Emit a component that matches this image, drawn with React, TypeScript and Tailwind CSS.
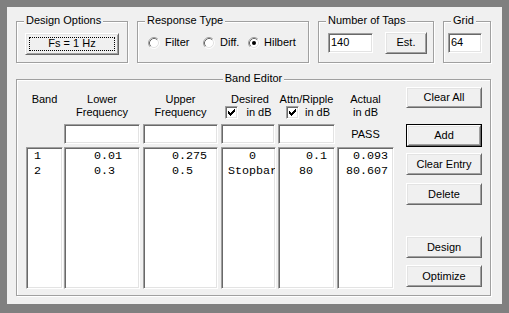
import React from "react";

const raised =
  "bg-[#f0f0f0] border border-t-white border-l-white border-r-[#696969] border-b-[#696969] shadow-[inset_1px_1px_0_#e3e3e3,inset_-1px_-1px_0_#a0a0a0]";
const sunken =
  "bg-white border border-t-[#a0a0a0] border-l-[#a0a0a0] border-r-white border-b-white shadow-[inset_1px_1px_0_#696969,inset_-1px_-1px_0_#e3e3e3]";

function Group({
  title,
  className,
  center,
  children,
}: {
  title: string;
  className: string;
  center?: boolean;
  children?: React.ReactNode;
}) {
  return (
    <div
      className={
        "relative border border-[#a0a0a0] shadow-[1px_1px_0_#fff,inset_1px_1px_0_#fff] " +
        className
      }
    >
      {center ? (
        <div className="absolute -top-[8px] left-0 right-0 flex justify-center">
          <span className="bg-[#f0f0f0] px-[2px] leading-[13px]">{title}</span>
        </div>
      ) : (
        <span className="absolute -top-[8px] left-[7px] bg-[#f0f0f0] px-[2px] leading-[13px]">
          {title}
        </span>
      )}
      {children}
    </div>
  );
}

function Btn({
  label,
  className,
  focus,
}: {
  label: string;
  className: string;
  focus?: boolean;
}) {
  return (
    <div
      className={
        raised +
        " relative flex items-center justify-center leading-[13px] " +
        className
      }
    >
      {focus && (
        <div className="absolute inset-[3px] border border-dotted border-black" />
      )}
      <span>{label}</span>
    </div>
  );
}

function Radio({ checked }: { checked?: boolean }) {
  return (
    <svg width="12" height="12" viewBox="0 0 12 12" className="shrink-0">
      <circle cx="6" cy="6" r="5" fill="#fff" />
      <path d="M2.11 9.89 A5.5 5.5 0 0 1 9.89 2.11" stroke="#a0a0a0" fill="none" />
      <path d="M9.89 2.11 A5.5 5.5 0 0 1 2.11 9.89" stroke="#ffffff" fill="none" />
      <path d="M2.82 9.18 A4.5 4.5 0 0 1 9.18 2.82" stroke="#696969" fill="none" />
      <path d="M9.18 2.82 A4.5 4.5 0 0 1 2.82 9.18" stroke="#e3e3e3" fill="none" />
      {checked && <circle cx="6" cy="6" r="2" fill="#000" />}
    </svg>
  );
}

function Check() {
  return (
    <div className={sunken + " w-[13px] h-[13px] flex items-center justify-center shrink-0"}>
      <svg width="7" height="7" viewBox="0 0 7 7" shapeRendering="crispEdges">
        <path
          d="M0 2h1v3H0z M1 3h1v3H1z M2 4h1v3H2z M3 3h1v3H3z M4 2h1v3H4z M5 1h1v3H5z M6 0h1v3H6z"
          fill="#000"
        />
      </svg>
    </div>
  );
}

function Column({
  width,
  ml,
  header,
  row2,
  items,
  pl,
}: {
  width: string;
  ml: string;
  header: React.ReactNode;
  row2: React.ReactNode;
  items: string[];
  pl: string;
}) {
  return (
    <div className={"flex flex-col " + width + " " + ml}>
      <div className="h-[26px] flex flex-col items-center leading-[13px]">{header}</div>
      <div className="mt-[5px] h-[20px]">{row2}</div>
      <div
        className={
          sunken +
          " mt-[3px] h-[142px] overflow-hidden pt-[1px] font-['Liberation_Mono','Courier_New',monospace] text-[11.7px] leading-[15px] whitespace-pre " +
          pl
        }
      >
        {items.map((t, i) => (
          <div key={i}>{t}</div>
        ))}
      </div>
    </div>
  );
}

export default function App() {
  const input = <div className={sunken + " h-[20px] w-full"} />;
  return (
    <div className="w-[509px] h-[313px] bg-[#808080] p-[7px] font-['Liberation_Sans',Arial,sans-serif] text-[11px] text-black">
      <div className="w-[495px] h-[297px] bg-[#f0f0f0] pl-[9px] pt-[14px]">
        <div className="flex gap-[9px]">
          <Group title="Design Options" className="w-[112px] h-[42px]">
            <div className="h-full flex items-center pl-[8px] pt-[3px]">
              <Btn label="Fs = 1 Hz" className="w-[94px] h-[22px]" focus />
            </div>
          </Group>
          <Group title="Response Type" className="w-[172px] h-[42px]">
            <div className="h-full flex items-center pl-[10px] pt-[1px]">
              <div className="flex items-center gap-[5px] w-[55px]">
                <Radio />
                <span className="leading-[13px]">Filter</span>
              </div>
              <div className="flex items-center gap-[5px] w-[45px]">
                <Radio />
                <span className="leading-[13px]">Diff.</span>
              </div>
              <div className="flex items-center gap-[4px]">
                <Radio checked />
                <span className="leading-[13px]">Hilbert</span>
              </div>
            </div>
          </Group>
          <Group title="Number of Taps" className="w-[116px] h-[42px]">
            <div className="h-full flex items-center pl-[9px] pt-[1px]">
              <div className={sunken + " w-[45px] h-[20px] flex items-center pl-[2px] leading-[13px]"}>
                140
              </div>
              <Btn label="Est." className="ml-[12px] w-[42px] h-[22px]" />
            </div>
          </Group>
          <Group title="Grid" className="w-[48px] h-[42px]">
            <div className="h-full flex items-center pl-[4px] pt-[1px]">
              <div className={sunken + " w-[34px] h-[20px] flex items-center pl-[2px] leading-[13px]"}>
                64
              </div>
            </div>
          </Group>
        </div>

        <Group title="Band Editor" center className="mt-[16px] w-[475px] h-[217px]">
          <div className="flex items-start pl-[9px]">
            <div className="flex mt-[13px]">
              <Column
                width="w-[37px]"
                ml=""
                header={<span>Band</span>}
                row2={null}
                items={["1", "2"]}
                pl="pl-[7px]"
              />
              <Column
                width="w-[76px]"
                ml="ml-[1px]"
                header={
                  <>
                    <span>Lower</span>
                    <span>Frequency</span>
                  </>
                }
                row2={input}
                items={["0.01", "0.3"]}
                pl="pl-[29px]"
              />
              <Column
                width="w-[75px]"
                ml="ml-[3px]"
                header={
                  <>
                    <span>Upper</span>
                    <span>Frequency</span>
                  </>
                }
                row2={input}
                items={["0.275", "0.5"]}
                pl="pl-[28px]"
              />
              <Column
                width="w-[55px]"
                ml="ml-[3px]"
                header={
                  <>
                    <span className="pl-[3px]">Desired</span>
                    <div className="flex items-center gap-[8px]">
                      <Check />
                      <span>in dB</span>
                    </div>
                  </>
                }
                row2={<div className={sunken + " h-[20px] w-[54px]"} />}
                items={["   0", "Stopbar"]}
                pl="pl-[6px]"
              />
              <Column
                width="w-[57px]"
                ml="ml-[2px]"
                header={
                  <>
                    <span>Attn/Ripple</span>
                    <div className="flex items-center gap-[6px] pl-[3px]">
                      <Check />
                      <span>in dB</span>
                    </div>
                  </>
                }
                row2={input}
                items={[" 0.1", "80"]}
                pl="pl-[20px]"
              />
              <Column
                width="w-[57px]"
                ml="ml-[2px]"
                header={
                  <>
                    <span>Actual</span>
                    <span>in dB</span>
                  </>
                }
                row2={
                  <div className="h-[20px] flex items-center justify-center leading-[13px]">
                    PASS
                  </div>
                }
                items={[" 0.093", "80.607"]}
                pl="pl-[8px]"
              />
            </div>
            <div className="ml-[12px] mt-[7px] flex flex-col w-[76px]">
              <Btn label="Clear All" className="h-[21px]" />
              <div className="mt-[16px] border border-black">
                <Btn label="Add" className="h-[21px]" />
              </div>
              <Btn label="Clear Entry" className="mt-[6px] h-[22px]" />
              <Btn label="Delete" className="mt-[8px] h-[22px]" />
              <Btn label="Design" className="mt-[31px] h-[22px]" />
              <Btn label="Optimize" className="mt-[7px] h-[22px]" />
            </div>
          </div>
        </Group>
      </div>
    </div>
  );
}
